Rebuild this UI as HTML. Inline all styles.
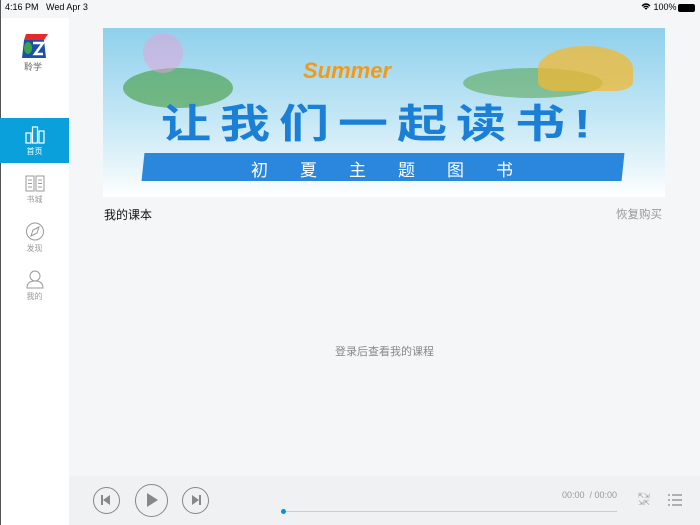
<!DOCTYPE html>
<html><head><meta charset="utf-8"><style>
*{margin:0;padding:0;box-sizing:border-box}
body{width:700px;height:525px;overflow:hidden;background:#f5f6f8;font-family:"Liberation Sans","Noto Sans CJK SC",sans-serif;position:relative}
.abs{position:absolute}
.side{left:0;top:18px;width:69px;height:507px;background:#fff;border-left:1px solid #555}
.nav{position:absolute;left:0;width:69px;text-align:center;font-size:8px;color:#999}
.player{left:69px;top:476px;width:631px;height:49px;background:#f0f1f3}
.btn{position:absolute;border:1.5px solid #888;border-radius:50%}
</style></head><body>
<div class="abs side"></div>
<div class="abs" style="left:0;top:0;width:1px;height:18px;background:#555"></div>
<div class="abs" style="left:5px;top:2px;font-size:9px;color:#000">4:16 PM&nbsp;&nbsp;&nbsp;Wed Apr 3</div>
<div class="abs" style="left:641px;top:2px;font-size:9px;color:#000">
<svg width="10" height="8" viewBox="0 0 10 8" style="vertical-align:-1px"><path d="M1 3 Q5 -1 9 3 M2.5 4.5 Q5 2 7.5 4.5 M4 6 Q5 5 6 6" stroke="#000" stroke-width="1.3" fill="none"/></svg> 100%</div>
<div class="abs" style="left:678px;top:4px;width:17px;height:8px;background:#000;border-radius:2px"></div>
<div class="abs" style="left:21px;top:34px;width:27px;height:24px">
<svg width="27" height="24" viewBox="0 0 27 24"><path d="M5 0H27L23 6H3Z" fill="#e52a2a"/><path d="M3 6H23L25 24H1Z" fill="#1b4fa8"/><ellipse cx="7" cy="14" rx="4" ry="6" fill="#3aa24a"/><path d="M12 9H22L14 20H22" stroke="#fff" stroke-width="2.5" fill="none"/></svg></div>
<div class="abs" style="left:24px;top:60px;font-size:9px;color:#666">聆学</div>
<div class="abs" style="left:0;top:118px;width:69px;height:45px;background:#0aa0dc"></div>
<div class="nav" style="top:126px;color:#fff">
<svg width="20" height="18" viewBox="0 0 20 18"><rect x="1" y="7" width="5" height="10" fill="none" stroke="#fff" stroke-width="1.2"/><rect x="7.5" y="1" width="5" height="16" fill="none" stroke="#fff" stroke-width="1.2"/><rect x="14" y="5" width="5" height="12" fill="none" stroke="#fff" stroke-width="1.2"/></svg><br>首页</div>
<div class="nav" style="top:175px"><svg width="20" height="17" viewBox="0 0 20 17"><path d="M1 1H9V16H1ZM11 1H19V16H11Z" fill="none" stroke="#999"/><path d="M3 5H7M3 8.5H7M3 12H7M13 5H17M13 8.5H17M13 12H17" stroke="#999"/></svg><br>书城</div>
<div class="nav" style="top:222px"><svg width="20" height="19" viewBox="0 0 20 19"><circle cx="10" cy="9.5" r="8.5" fill="none" stroke="#999"/><path d="M14 5L8 8L6 14L12 11Z" fill="none" stroke="#999"/></svg><br>发现</div>
<div class="nav" style="top:270px"><svg width="20" height="19" viewBox="0 0 20 19"><circle cx="10" cy="6" r="5" fill="none" stroke="#999"/><path d="M2 18Q2 11 10 11Q18 11 18 18Z" fill="none" stroke="#999"/></svg><br>我的</div>
<div class="abs" style="left:103px;top:28px;width:562px;height:169px;overflow:hidden;background:linear-gradient(180deg,#8fd0ec 0%,#c6e8f6 55%,#eaf6fb 85%,#fff 100%)">
<div class="abs" style="left:20px;top:40px;width:110px;height:40px;background:#3f9a3a;border-radius:50%;opacity:.6"></div>
<div class="abs" style="left:40px;top:5px;width:40px;height:40px;background:#e8a0d8;border-radius:50%;opacity:.5"></div>
<div class="abs" style="left:360px;top:40px;width:140px;height:30px;background:#4b9e3c;border-radius:50%;opacity:.5"></div>
<div class="abs" style="left:435px;top:18px;width:95px;height:45px;background:#f2b830;border-radius:50% 50% 20% 20%;opacity:.75"></div>
<div class="abs" style="left:200px;top:30px;font-size:22px;font-weight:bold;color:#f29a18;font-style:italic">Summer</div>
<div class="abs" style="left:58px;top:72px;font-size:50px;font-weight:bold;color:#1c7fd6;letter-spacing:9px;white-space:nowrap;transform:scaleY(.8);transform-origin:left top;line-height:60px">让我们一起读书!</div>
<div class="abs" style="left:40px;top:125px;width:480px;height:28px;background:#2b87dc;transform:skewX(-6deg)"></div>
<div class="abs" style="left:148px;top:128px;font-size:17px;color:#fff;letter-spacing:32px;white-space:nowrap">初夏主题图书</div>
</div>
<div class="abs" style="left:104px;top:206px;font-size:12px;color:#111">我的课本</div>
<div class="abs" style="left:616px;top:206px;font-size:11.5px;color:#999">恢复购买</div>
<div class="abs" style="left:335px;top:343px;font-size:11px;color:#888">登录后查看我的课程</div>
<div class="abs player"></div>
<div class="btn" style="left:93px;top:487px;width:27px;height:27px"></div>
<div class="abs" style="left:101px;top:495px;width:2px;height:10px;background:#888"></div><div class="abs" style="left:103px;top:495px;width:0;height:0;border-top:5px solid transparent;border-bottom:5px solid transparent;border-right:7px solid #888"></div>
<div class="btn" style="left:135px;top:484px;width:33px;height:33px"></div>
<div class="abs" style="left:147px;top:493px;width:0;height:0;border-top:7px solid transparent;border-bottom:7px solid transparent;border-left:11px solid #888"></div>
<div class="btn" style="left:182px;top:487px;width:27px;height:27px"></div>
<div class="abs" style="left:192px;top:495px;width:0;height:0;border-top:5px solid transparent;border-bottom:5px solid transparent;border-left:7px solid #888"></div><div class="abs" style="left:199px;top:495px;width:2px;height:10px;background:#888"></div>
<div class="abs" style="left:284px;top:511px;width:333px;height:1px;background:#ccc"></div>
<div class="abs" style="left:281px;top:509px;width:5px;height:5px;border-radius:50%;background:#0a8fe0"></div>
<div class="abs" style="left:562px;top:490px;font-size:9px;color:#999">00:00 &nbsp;/ 00:00</div>
<div class="abs" style="left:638px;top:493px;font-size:7px;color:#999;line-height:7px">⇱⇲<br>⇲⇱</div>
<svg class="abs" style="left:668px;top:494px" width="14" height="12" viewBox="0 0 14 12"><path d="M0 1H2M4 1H14M0 6H2M4 6H14M0 11H2M4 11H14" stroke="#888" stroke-width="1.2"/></svg>
</body></html>
